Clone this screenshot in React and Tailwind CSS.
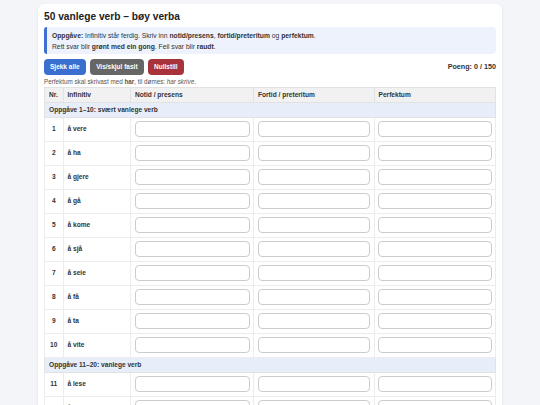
import { useState } from 'react';

const sections = [
  {
    title: 'Oppgåve 1–10: svært vanlege verb',
    verbs: ['å vere', 'å ha', 'å gjere', 'å gå', 'å kome', 'å sjå', 'å seie', 'å få', 'å ta', 'å vite'],
  },
  {
    title: 'Oppgåve 11–20: vanlege verb',
    verbs: ['å lese', 'å skrive', 'å sove', 'å ete', 'å drikke', 'å sitje', 'å liggje', 'å stå', 'å finne', 'å gje'],
  },
];

const App = () => {
  const [answers, setAnswers] = useState({});

  const handleChange = (key, value) => {
    setAnswers({ ...answers, [key]: value });
  };

  let nr = 0;

  return (
    <div className="min-h-screen bg-[#f4f5f9] px-[38px] pt-[4px] font-['Liberation_Sans',Arial,sans-serif] text-[#222]">
      <div className="bg-white rounded-[6px] shadow-[0_1px_3px_rgba(0,0,0,0.08)] px-[6px] pt-[6px] pb-[6px]">
        <h1 className="text-[10.2px] leading-[14px] font-bold mb-[3px]">50 vanlege verb – bøy verba</h1>

        <div className="bg-[#edf2fc] border-l-[3px] border-[#3f6fd1] rounded-r-[4px] rounded-l-[3px] pl-[5px] py-[2.5px] text-[6.75px] leading-[11px] text-[#333]">
          <div>
            <b>Oppgåve:</b> Infinitiv står ferdig. Skriv inn <b>notid/presens</b>, <b>fortid/preteritum</b> og <b>perfektum</b>.
          </div>
          <div>
            Rett svar blir <b>grønt med ein gong</b>. Feil svar blir <b>raudt</b>.
          </div>
        </div>

        <div className="flex items-center justify-between mt-[5px]">
          <div className="flex gap-[4.5px]">
            <button className="h-[16px] px-[6px] rounded-[4px] bg-[#3b6fcf] text-white text-[6.5px] font-bold">Sjekk alle</button>
            <button className="h-[16px] px-[6px] rounded-[4px] bg-[#666666] text-white text-[6.5px] font-bold">Vis/skjul fasit</button>
            <button className="h-[16px] px-[6px] rounded-[4px] bg-[#a8333a] text-white text-[6.5px] font-bold">Nullstill</button>
          </div>
          <div className="text-[7.2px] font-bold text-[#333]">Poeng: 0 / 150</div>
        </div>

        <p className="text-[6.3px] leading-[8px] text-[#555] mt-[3px] mb-[1px]">
          Perfektum skal skrivast med <b>har</b>, til dømes: <i>har skrive</i>.
        </p>

        <table className="w-full table-fixed border-collapse text-[6.6px] text-[#333]">
          <colgroup>
            <col className="w-[18.5px]" />
            <col className="w-[67.5px]" />
            <col className="w-[123px]" />
            <col className="w-[120.5px]" />
            <col />
          </colgroup>
          <thead>
            <tr className="bg-[#f1f1f1] h-[14.5px]">
              <th className="text-left font-bold px-[4px] border border-[#e2e2e2]">Nr.</th>
              <th className="text-left font-bold px-[4px] border border-[#e2e2e2]">Infinitiv</th>
              <th className="text-left font-bold px-[4px] border border-[#e2e2e2]">Notid / presens</th>
              <th className="text-left font-bold px-[4px] border border-[#e2e2e2]">Fortid / preteritum</th>
              <th className="text-left font-bold px-[4px] border border-[#e2e2e2]">Perfektum</th>
            </tr>
          </thead>
          <tbody>
            {sections.map((s) => (
              <>
                <tr key={s.title} className="bg-[#e8eef9] h-[15px]">
                  <td colSpan={5} className="px-[4px] font-bold border border-[#e2e2e2]">{s.title}</td>
                </tr>
                {s.verbs.map((v) => {
                  nr += 1;
                  const n = nr;
                  return (
                    <tr key={n} className="h-[24px]">
                      <td className="text-center font-bold border border-[#ececec]">{n}</td>
                      <td className="px-[4px] font-bold border border-[#ececec]">{v}</td>
                      {['notid', 'fortid', 'perf'].map((c) => (
                        <td key={c} className="px-[3.5px] border border-[#ececec]">
                          <input
                            type="text"
                            value={answers[`${n}-${c}`] || ''}
                            onChange={(e) => handleChange(`${n}-${c}`, e.target.value)}
                            className="block w-full h-[16.5px] border border-[#cccccc] rounded-[4px] bg-white text-[7px] px-[3px] outline-none"
                          />
                        </td>
                      ))}
                    </tr>
                  );
                })}
              </>
            ))}
          </tbody>
        </table>
      </div>
    </div>
  );
};

export default App;
